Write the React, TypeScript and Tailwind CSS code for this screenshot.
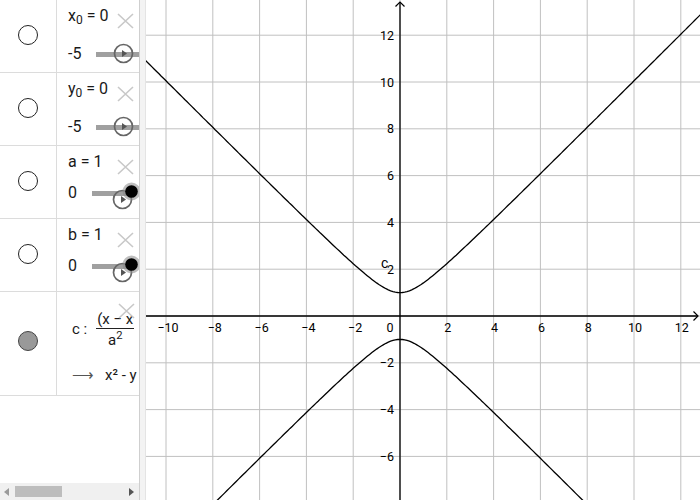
import React from "react";

// graph geometry (px inside the svg)
const U = 23.4;
const OX = 254;
const OY = 316;
const W = 554;
const H = 500;

const px = (x: number) => OX + x * U;
const py = (y: number) => OY - y * U;

const branch = (sign: number) => {
  const pts: string[] = [];
  for (let x = -11.2; x <= 13.2; x += 0.1) {
    const y = sign * Math.sqrt(1 + x * x);
    pts.push(`${px(x).toFixed(1)},${py(y).toFixed(1)}`);
  }
  return "M" + pts.join(" L");
};

const Marble = ({ filled }: { filled?: boolean }) => (
  <svg width="22" height="22" viewBox="0 0 22 22">
    <circle cx="11" cy="11" r="9.5" fill={filled ? "#999999" : "#ffffff"} stroke={filled ? "#444444" : "#222222"} strokeWidth="1" />
  </svg>
);

const DeleteX = ({ className }: { className: string }) => (
  <svg className={className} width="17" height="16" viewBox="0 0 17 16">
    <path d="M1 1 L16 15 M16 1 L1 15" stroke="#c8c8c8" strokeWidth="1.6" />
  </svg>
);

const PlayKnob = ({ className }: { className: string }) => (
  <svg className={className} width="21" height="21" viewBox="0 0 21 21">
    <circle cx="10.5" cy="10.5" r="9" fill="none" stroke="#666666" strokeWidth="1.7" />
    <path d="M9 7 L14 10.5 L9 14 Z" fill="#555555" />
  </svg>
);

const SliderDot = ({ className }: { className: string }) => (
  <svg className={className} width="19" height="19" viewBox="0 0 19 19">
    <circle cx="9.5" cy="9.5" r="9" fill="#888888" fillOpacity="0.55" />
    <circle cx="9.5" cy="9.5" r="6.3" fill="#000000" />
  </svg>
);

type SliderRow = {
  label: React.ReactNode;
  min: string;
  gap: string;
  end: boolean;
};

const sliders: SliderRow[] = [
  { label: <>x<sub>0</sub> = 0</>, min: "-5", gap: "mt-[18px]", end: false },
  { label: <>y<sub>0</sub> = 0</>, min: "-5", gap: "mt-[18px]", end: false },
  { label: <>a = 1</>, min: "0", gap: "mt-[11px]", end: true },
  { label: <>b = 1</>, min: "0", gap: "mt-[11px]", end: true },
];

function AlgebraPanel() {
  return (
    <div className="flex h-full w-[140px] shrink-0 flex-col overflow-hidden border-r border-[#cfcfcf] bg-white text-[16px] text-[#1a1a1a]" style={{ fontFamily: "Roboto, 'Liberation Sans', sans-serif" }}>
      {sliders.map((s, i) => (
        <div key={i} className="flex h-[73px] shrink-0 border-b border-[#dcdcdc]">
          <div className="flex w-[57px] shrink-0 items-center justify-center border-r border-[#dcdcdc] pb-[3px]">
            <Marble />
          </div>
          <div className="relative flex-1 pl-[11px]">
            <div className="mt-[6px] h-[20px] leading-[20px] whitespace-nowrap">{s.label}</div>
            <div className={`flex h-[20px] items-center leading-[20px] ${s.gap}`}>
              <span className={s.end ? "w-[24px]" : "w-[28px]"}>{s.min}</span>
              <div className={`h-[5px] bg-[#a0a0a0] ${s.end ? "w-[40px]" : "flex-1"}`} />
            </div>
            {s.end ? (
              <>
                <PlayKnob className="absolute left-[55px] top-[43px]" />
                <SliderDot className="absolute left-[65px] top-[36px]" />
              </>
            ) : (
              <PlayKnob className="absolute left-[56px] top-[43px]" />
            )}
            <DeleteX className="absolute left-[60px] top-[13px]" />
          </div>
        </div>
      ))}
      <div className="flex h-[104px] shrink-0 border-b border-[#dcdcdc]">
        <div className="flex w-[57px] shrink-0 items-center justify-center border-r border-[#dcdcdc] pb-[6px]">
          <Marble filled />
        </div>
        <div className="relative flex-1 pl-[15px]">
          <div className="mt-[18px] flex items-center whitespace-nowrap">
            <span className="text-[15px]">c :</span>
            <div className="ml-[9px] flex flex-col items-center text-[15px] leading-[18px]">
              <span className="border-b border-[#222] px-[1px]">(x − x</span>
              <span className="pt-[2px]">a<sup>2</sup></span>
            </div>
          </div>
          <div className="mt-[15px] flex items-center whitespace-nowrap text-[15px]">
            <span className="text-[#555]">⟶</span>
            <span className="ml-[11px]">x² - y</span>
          </div>
          <DeleteX className="absolute left-[61px] top-[11px]" />
        </div>
      </div>
      <div className="flex-1" />
      <div className="flex h-[17px] shrink-0 items-center bg-[#f0f0f0] px-[4px]">
        <svg width="6" height="8" viewBox="0 0 6 8"><path d="M5 0 L0 4 L5 8 Z" fill="#9a9a9a" /></svg>
        <div className="ml-[5px] h-[11px] w-[47px] bg-[#bdbdbd]" />
        <div className="flex-1" />
        <svg width="6" height="8" viewBox="0 0 6 8"><path d="M0 0 L5 4 L0 8 Z" fill="#555" /></svg>
      </div>
    </div>
  );
}

function Graph() {
  const xs: number[] = [];
  for (let x = -10; x <= 12; x += 2) xs.push(x);
  const ys: number[] = [];
  for (let y = -6; y <= 12; y += 2) ys.push(y);
  const font = "Roboto, 'Liberation Sans', sans-serif";
  return (
    <svg width={W} height={H} viewBox={`0 0 ${W} ${H}`} className="block">
      <rect width={W} height={H} fill="#ffffff" />
      {xs.map((x) => (
        <line key={"gx" + x} x1={px(x)} x2={px(x)} y1={0} y2={H} stroke="#c0c0c0" strokeWidth="1" />
      ))}
      {ys.map((y) => (
        <line key={"gy" + y} x1={0} x2={W} y1={py(y)} y2={py(y)} stroke="#c0c0c0" strokeWidth="1" />
      ))}
      {/* axes */}
      <line x1={0} x2={552} y1={OY} y2={OY} stroke="#000" strokeWidth="1.3" />
      <line x1={OX} x2={OX} y1={2} y2={H} stroke="#000" strokeWidth="1.3" />
      <path d={`M${OX - 4.5} ${6.5} L${OX} ${2} L${OX + 4.5} ${6.5}`} fill="none" stroke="#000" strokeWidth="1.2" />
      <path d={`M${547.5} ${OY - 4.5} L${552} ${OY} L${547.5} ${OY + 4.5}`} fill="none" stroke="#000" strokeWidth="1.2" />
      {/* labels */}
      <g fontFamily={font} fontSize="12.5" fill="#000">
        {xs.map((x) =>
          x === 0 ? null : (
            <text key={"lx" + x} x={px(x) + (x < 0 ? 2 : 1)} y={OY + 16} textAnchor="middle">
              {x < 0 ? `−${-x}` : x}
            </text>
          )
        )}
        <text x={OX - 10} y={OY + 16} textAnchor="middle">0</text>
        {ys.map((y) =>
          y === 0 ? null : (
            <text key={"ly" + y} x={OX - 6} y={py(y) + 4.5} textAnchor="end">
              {y < 0 ? `−${-y}` : y}
            </text>
          )
        )}
        <text x={OX - 19} y={268} fontSize="14">c</text>
      </g>
      {/* hyperbola */}
      <path d={branch(1)} fill="none" stroke="#000" strokeWidth="1.3" />
      <path d={branch(-1)} fill="none" stroke="#000" strokeWidth="1.3" />
    </svg>
  );
}

export default function App() {
  return (
    <div className="flex h-[500px] w-[700px] overflow-hidden bg-white">
      <AlgebraPanel />
      <div className="h-full w-[6px] shrink-0 border-r border-[#e4e4e4] bg-[#f3f3f3]" />
      <Graph />
    </div>
  );
}
